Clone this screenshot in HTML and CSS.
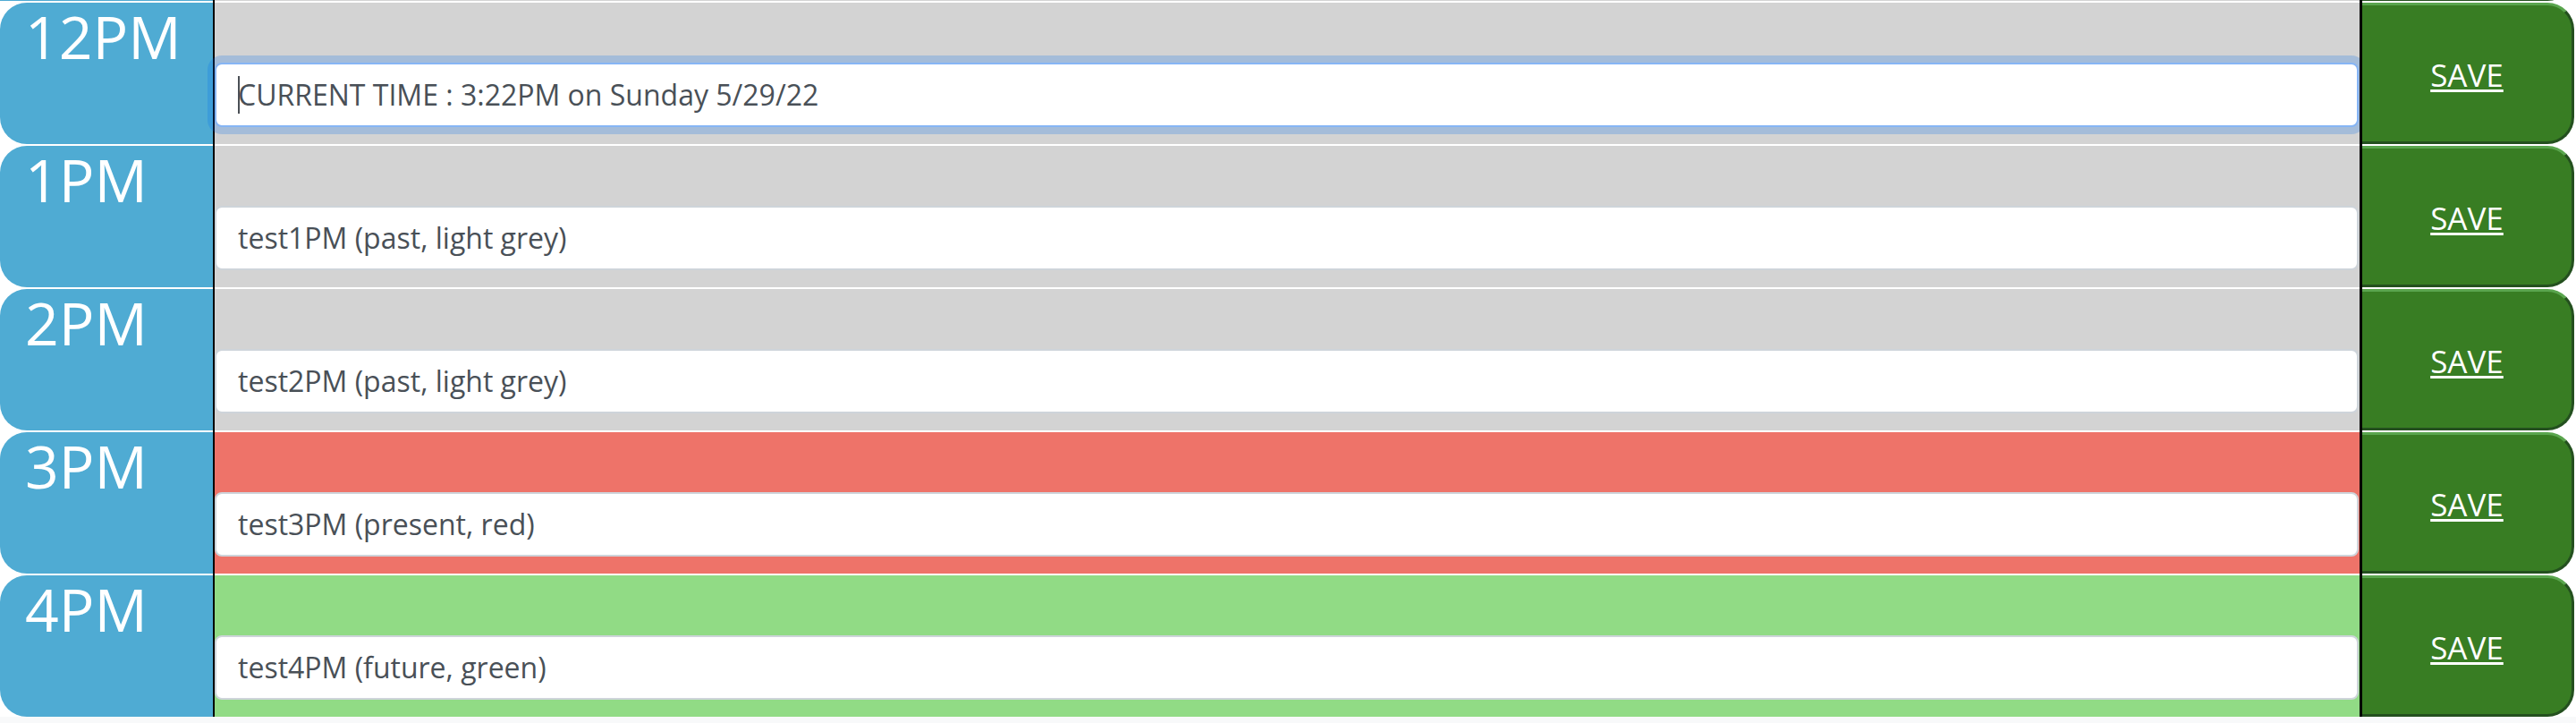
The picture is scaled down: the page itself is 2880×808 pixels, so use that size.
FILE: index.html
```html
<!DOCTYPE html>
<html lang="en">
<head>
<meta charset="utf-8">
<title>Work Day Scheduler</title>
<link rel="stylesheet" href="styles.css">
</head>
<body>
<main class="planner">
  <div class="row stub">
    <div class="hour"></div>
    <div class="rule"></div>
    <div class="slot past"></div>
    <div class="rule rule-r"></div>
    <div class="save"></div>
  </div>
  <div class="row">
    <div class="hour">12PM</div>
    <div class="rule"></div>
    <div class="slot past"><div class="entry focused"><span class="caret"></span>CURRENT TIME : 3:22PM on Sunday 5/29/22</div></div>
    <div class="rule rule-r"></div>
    <div class="save"><span class="save-label">SAVE</span></div>
  </div>
  <div class="row">
    <div class="hour">1PM</div>
    <div class="rule"></div>
    <div class="slot past"><div class="entry">test1PM (past, light grey)</div></div>
    <div class="rule rule-r"></div>
    <div class="save"><span class="save-label">SAVE</span></div>
  </div>
  <div class="row">
    <div class="hour">2PM</div>
    <div class="rule"></div>
    <div class="slot past"><div class="entry">test2PM (past, light grey)</div></div>
    <div class="rule rule-r"></div>
    <div class="save"><span class="save-label">SAVE</span></div>
  </div>
  <div class="row">
    <div class="hour">3PM</div>
    <div class="rule"></div>
    <div class="slot present"><div class="entry">test3PM (present, red)</div></div>
    <div class="rule rule-r"></div>
    <div class="save"><span class="save-label">SAVE</span></div>
  </div>
  <div class="row">
    <div class="hour">4PM</div>
    <div class="rule"></div>
    <div class="slot future"><div class="entry">test4PM (future, green)</div></div>
    <div class="rule rule-r"></div>
    <div class="save"><span class="save-label">SAVE</span></div>
  </div>
</main>
<div class="foot"></div>
</body>
</html>
```

FILE: styles.css
```css
* {
  box-sizing: border-box;
}

html, body {
  margin: 0;
  padding: 0;
  background: #ffffff;
  font-family: "Open Sans", "Noto Sans", sans-serif;
}

body {
  width: 2880px;
  height: 808px;
  overflow: hidden;
}

.planner {
  display: flex;
  flex-direction: column;
}

.row {
  display: grid;
  grid-template-columns: 238px 2px 2398px 3px 237px;
  height: 160px;
  background: #ffffff;
}

.row.stub {
  height: 1px;
}

.hour,
.slot,
.save {
  margin-top: 2px;
}

.stub .hour,
.stub .slot,
.stub .save {
  margin-top: 0;
}

.stub .save {
  background: #24501f;
  border: 0;
}

.hour {
  background: #4fabd3;
  color: #ffffff;
  font-size: 66px;
  line-height: 1;
  padding: 4px 0 0 28px;
  border-radius: 30px 0 0 30px;
}

.stub .hour {
  border-radius: 0;
}

.rule {
  background: #000000;
}

.slot {
  padding: 67px 1px 0 0;
}

.past {
  background: #d3d3d3;
}

.present {
  background: #ee7369;
}

.future {
  background: #91db85;
}

.entry {
  height: 72px;
  background: #ffffff;
  border: 2px solid #ced4da;
  border-radius: 8px;
  padding: 0 24px;
  display: flex;
  align-items: center;
  font-size: 32px;
  line-height: 1.5;
  color: #495057;
  white-space: pre;
}

.entry.focused {
  border-color: #86b5f5;
  box-shadow: 0 0 0 8px rgba(0, 110, 240, 0.22);
}

.caret {
  display: inline-block;
  width: 2px;
  height: 42px;
  margin-right: -2px;
  background: #4a4f55;
}

.save {
  background: #387d23;
  border-top: 3px solid #5aa54e;
  border-right: 3px solid #24501f;
  border-bottom: 3px solid #24501f;
  border-radius: 0 30px 30px 0;
  display: flex;
  align-items: center;
  justify-content: center;
}

.save-label {
  color: #ffffff;
  font-size: 35px;
  line-height: 1;
  text-decoration: underline;
  text-decoration-thickness: 3px;
  text-underline-offset: 3px;
  margin-top: 2px;
}

.foot {
  height: 7px;
  background: #f8f9fa;
}
```
